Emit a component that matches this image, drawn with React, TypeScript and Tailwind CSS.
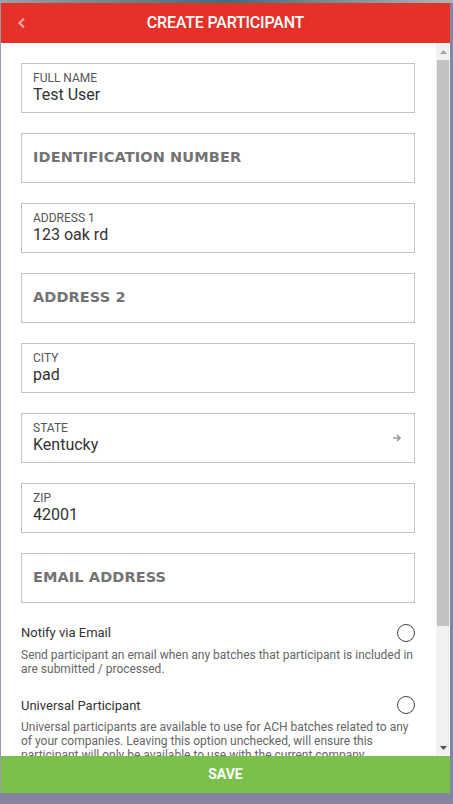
import React from "react";

const roboto = { fontFamily: "Roboto, 'Liberation Sans', sans-serif" };

function Filled({ label, value, arrow }: { label: string; value: string; arrow?: boolean }) {
  return (
    <div className="relative h-[50px] border border-[#c4c4c4] bg-white pl-[11px] pt-[7px] flex flex-col">
      <div className="text-[12px] leading-[14px] text-[#555] uppercase">{label}</div>
      <div className="text-[16px] leading-[20px] text-[#333]">{value}</div>
      {arrow && (
        <svg className="absolute right-[12px] top-[19px]" width="10" height="10" viewBox="0 0 10 10">
          <path d="M1 5h7M5 2l3 3-3 3" stroke="#9a9a9a" strokeWidth="1.6" fill="none" />
        </svg>
      )}
    </div>
  );
}

function Empty({ label }: { label: string }) {
  return (
    <div className="h-[50px] border border-[#c4c4c4] bg-white pl-[11px] flex items-center">
      <div
        className="text-[14.5px] text-[#737373] tracking-[0.1px]"
        style={{ fontFamily: "'DejaVu Sans', 'Open Sans', sans-serif", fontWeight: 600 }}
      >
        {label}
      </div>
    </div>
  );
}

function Toggle({ title, desc }: { title: string; desc: string }) {
  return (
    <div className="flex flex-col">
      <div className="flex items-center justify-between">
        <div className="text-[13px] text-[#333]">{title}</div>
        <div className="w-[18px] h-[18px] rounded-full border border-[#444]" />
      </div>
      <div className="text-[12px] leading-[14px] text-[#666] mt-[5px]">{desc}</div>
    </div>
  );
}

export default function App() {
  return (
    <div className="w-[453px] h-[804px] bg-[#8585a0] overflow-hidden relative" style={roboto}>
      <div className="h-[3px] bg-gradient-to-r from-[#9aa0a6] via-[#3a6f78] to-[#b0b4b8]" />
      <div className="flex h-[790px]">
        <div className="w-[1px] bg-[#9a9aa8]" />
        <div className="w-[449px] flex flex-col bg-white">
          <div className="h-[40px] bg-[#e53128] flex items-center relative">
            <svg className="absolute left-[16px] top-[14px]" width="9" height="12" viewBox="0 0 9 12">
              <path d="M7 1.5L2.5 6 7 10.5" stroke="#f5a8a2" strokeWidth="2.2" fill="none" />
            </svg>
            <div className="flex-1 text-center text-white text-[16px] font-medium tracking-[-0.2px]">
              CREATE PARTICIPANT
            </div>
          </div>
          <div className="flex flex-1 min-h-0">
            <div className="flex-1 overflow-hidden pl-[20px] pr-[21px] pt-[20px] flex flex-col">
              <div className="flex flex-col gap-[20px]">
                <Filled label="Full Name" value="Test User" />
                <Empty label="IDENTIFICATION NUMBER" />
                <Filled label="Address 1" value="123 oak rd" />
                <Empty label="ADDRESS 2" />
                <Filled label="City" value="pad" />
                <Filled label="State" value="Kentucky" arrow />
                <Filled label="Zip" value="42001" />
                <Empty label="EMAIL ADDRESS" />
              </div>
              <div className="mt-[20px]">
                <Toggle
                  title="Notify via Email"
                  desc="Send participant an email when any batches that participant is included in are submitted / processed."
                />
              </div>
              <div className="mt-[20px]">
                <Toggle
                  title="Universal Participant"
                  desc="Universal participants are available to use for ACH batches related to any of your companies. Leaving this option unchecked, will ensure this participant will only be available to use with the current company."
                />
              </div>
            </div>
            <div className="w-[14px] bg-[#f1f1f1] flex flex-col items-center">
              <div className="h-[17px] flex items-center justify-center">
                <svg width="7" height="4" viewBox="0 0 7 4"><path d="M0 4L3.5 0 7 4z" fill="#a3a3a3" /></svg>
              </div>
              <div className="w-[12px] h-[566px] bg-[#c1c1c1]" />
              <div className="flex-1" />
              <div className="h-[17px] flex items-center justify-center">
                <svg width="7" height="4" viewBox="0 0 7 4"><path d="M0 0L3.5 4 7 0z" fill="#505050" /></svg>
              </div>
            </div>
          </div>
          <div className="h-[37px] bg-[#7bc04a] flex items-center justify-center text-white text-[14px] font-bold">
            SAVE
          </div>
        </div>
      </div>
    </div>
  );
}
